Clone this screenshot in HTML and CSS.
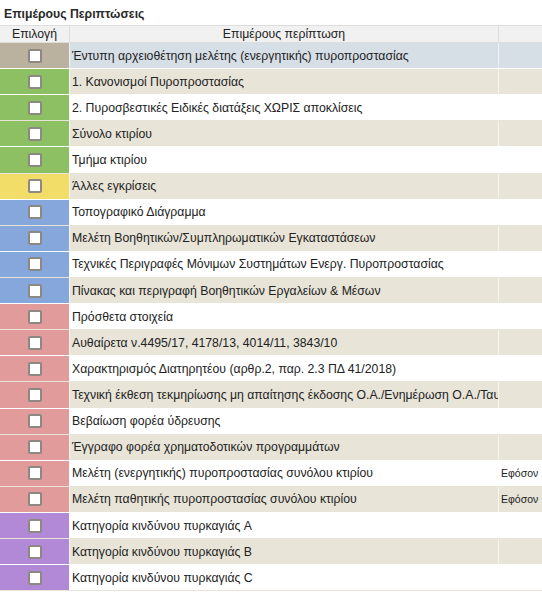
FILE: index.html
```html
<!DOCTYPE html>
<html lang="el">
<head>
<meta charset="utf-8">
<link rel="stylesheet" href="styles.css">
</head>
<body>
<div class="page">
  <h1 class="title">Επιμέρους Περιπτώσεις</h1>
  <div class="grid">
    <div class="row head">
      <div class="cell c1">Επιλογή</div>
      <div class="cell c2">Επιμέρους περίπτωση</div>
      <div class="cell c3"></div>
    </div>
    <div class="row sel"><div class="cell c1 k-taupe"><span class="box"></span></div><div class="cell c2">Έντυπη αρχειοθέτηση μελέτης (ενεργητικής) πυροπροστασίας</div><div class="cell c3"></div></div>
    <div class="row alt"><div class="cell c1 k-green"><span class="box"></span></div><div class="cell c2">1. Κανονισμοί Πυροπροστασίας</div><div class="cell c3"></div></div>
    <div class="row"><div class="cell c1 k-green"><span class="box"></span></div><div class="cell c2">2. Πυροσβεστικές Ειδικές διατάξεις ΧΩΡΙΣ αποκλίσεις</div><div class="cell c3"></div></div>
    <div class="row alt"><div class="cell c1 k-green"><span class="box"></span></div><div class="cell c2">Σύνολο κτιρίου</div><div class="cell c3"></div></div>
    <div class="row"><div class="cell c1 k-green"><span class="box"></span></div><div class="cell c2">Τμήμα κτιρίου</div><div class="cell c3"></div></div>
    <div class="row alt"><div class="cell c1 k-yellow"><span class="box"></span></div><div class="cell c2">Άλλες εγκρίσεις</div><div class="cell c3"></div></div>
    <div class="row"><div class="cell c1 k-blue"><span class="box"></span></div><div class="cell c2">Τοπογραφικό Διάγραμμα</div><div class="cell c3"></div></div>
    <div class="row alt"><div class="cell c1 k-blue"><span class="box"></span></div><div class="cell c2">Μελέτη Βοηθητικών/Συμπληρωματικών Εγκαταστάσεων</div><div class="cell c3"></div></div>
    <div class="row"><div class="cell c1 k-blue"><span class="box"></span></div><div class="cell c2">Τεχνικές Περιγραφές Μόνιμων Συστημάτων Ενεργ. Πυροπροστασίας</div><div class="cell c3"></div></div>
    <div class="row alt"><div class="cell c1 k-blue"><span class="box"></span></div><div class="cell c2">Πίνακας και περιγραφή Βοηθητικών Εργαλείων &amp; Μέσων</div><div class="cell c3"></div></div>
    <div class="row"><div class="cell c1 k-pink"><span class="box"></span></div><div class="cell c2">Πρόσθετα στοιχεία</div><div class="cell c3"></div></div>
    <div class="row alt"><div class="cell c1 k-pink"><span class="box"></span></div><div class="cell c2">Αυθαίρετα ν.4495/17, 4178/13, 4014/11, 3843/10</div><div class="cell c3"></div></div>
    <div class="row"><div class="cell c1 k-pink"><span class="box"></span></div><div class="cell c2">Χαρακτηρισμός Διατηρητέου (αρθρ.2, παρ. 2.3 ΠΔ 41/2018)</div><div class="cell c3"></div></div>
    <div class="row alt"><div class="cell c1 k-pink"><span class="box"></span></div><div class="cell c2">Τεχνική έκθεση τεκμηρίωσης μη απαίτησης έκδοσης Ο.Α./Ενημέρωση Ο.Α./Ταυτότητα κτιρίου</div><div class="cell c3"></div></div>
    <div class="row"><div class="cell c1 k-pink"><span class="box"></span></div><div class="cell c2">Βεβαίωση φορέα ύδρευσης</div><div class="cell c3"></div></div>
    <div class="row alt"><div class="cell c1 k-pink"><span class="box"></span></div><div class="cell c2">Έγγραφο φορέα χρηματοδοτικών προγραμμάτων</div><div class="cell c3"></div></div>
    <div class="row"><div class="cell c1 k-pink"><span class="box"></span></div><div class="cell c2">Μελέτη (ενεργητικής) πυροπροστασίας συνόλου κτιρίου</div><div class="cell c3">Εφόσον</div></div>
    <div class="row alt"><div class="cell c1 k-pink"><span class="box"></span></div><div class="cell c2">Μελέτη παθητικής πυροπροστασίας συνόλου κτιρίου</div><div class="cell c3">Εφόσον</div></div>
    <div class="row"><div class="cell c1 k-purple"><span class="box"></span></div><div class="cell c2">Κατηγορία κινδύνου πυρκαγιάς A</div><div class="cell c3"></div></div>
    <div class="row alt"><div class="cell c1 k-purple"><span class="box"></span></div><div class="cell c2">Κατηγορία κινδύνου πυρκαγιάς B</div><div class="cell c3"></div></div>
    <div class="row"><div class="cell c1 k-purple"><span class="box"></span></div><div class="cell c2">Κατηγορία κινδύνου πυρκαγιάς C</div><div class="cell c3"></div></div>
  </div>
</div>
</body>
</html>
```

FILE: styles.css
```css
html, body {
  margin: 0;
  padding: 0;
  background: #ffffff;
  overflow: hidden;
}
body {
  font-family: "Liberation Sans", Arial, sans-serif;
  font-size: 12.25px;
  color: #222222;
}
.page {
  width: 542px;
}
.title {
  margin: 0;
  padding: 7px 0 0 4px;
  height: 18px;
  font-size: 12.25px;
  font-weight: bold;
  color: #2a2a2a;
}
.grid {
  display: flex;
  flex-direction: column;
}
.row {
  display: grid;
  grid-template-columns: 69px 429px 44px;
  height: 26.12px;
  flex: none;
  background: #ffffff;
  border-bottom: 1px solid #e8e4d8;
  box-sizing: border-box;
}
.row.alt {
  background: #e8e4d8;
  border-bottom-color: #ffffff;
}
.row.sel {
  background: #d6dee6;
  border-bottom-color: #ffffff;
}
.row.head {
  height: 18px;
  background: #f1f1f1;
  border-top: 1px solid #dddddd;
  border-bottom: 1px solid #dddddd;
}
.cell {
  display: flex;
  align-items: center;
  padding-left: 2px;
  white-space: nowrap;
  overflow: hidden;
  border-left: 1px solid rgba(255,255,255,0.6);
}
.cell.c1 {
  justify-content: center;
  padding-left: 0;
  border-left: none;
}
.head .cell {
  justify-content: center;
  padding-left: 0;
  border-left: 1px solid #dddddd;
}
.head .cell.c1 { border-left: none; }
.c3 {
  font-size: 10.5px;
}
.box {
  width: 10px;
  height: 10px;
  background: #ffffff;
  border: 2px solid #8e8883;
  border-radius: 2px;
}
.k-taupe { background: #bab29f; }
.k-green { background: #8cc063; }
.k-yellow { background: #f1dd67; }
.k-blue { background: #86a7dc; }
.k-pink { background: #e19b9b; }
.k-purple { background: #b189d6; }
```
